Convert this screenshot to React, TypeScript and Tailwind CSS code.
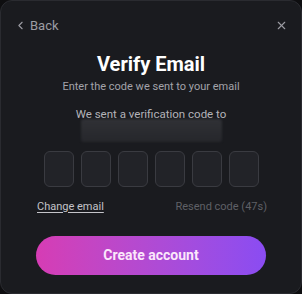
import { ChevronLeft, X } from "lucide-react";

export default function App() {
  const slots = [0, 1, 2, 3, 4, 5];

  return (
    <div className="w-[302px] h-[294px] bg-[#0e0e10]" style={{ fontFamily: "Roboto, 'Liberation Sans', sans-serif" }}>
      <div className="w-full h-full rounded-[12px] border border-[#2a2b30] bg-[#1a1b1f] flex flex-col">
        <div className="flex items-center justify-between pl-[13px] pr-[13px] pt-[15px]">
          <button className="flex items-center gap-[3px] text-[13px] text-[#9c9ca3]">
            <ChevronLeft className="size-[13px]" strokeWidth={2} />
            Back
          </button>
          <X className="size-[13px] text-[#9c9ca3]" strokeWidth={2} />
        </div>

        <h2 className="mt-[16px] text-center text-[20px] leading-[24px] font-bold text-white">Verify Email</h2>
        <p className="mt-[4px] text-center text-[11px] leading-[14px] text-[#a3a3aa]">
          Enter the code we sent to your email
        </p>

        <p className="mt-[13px] text-center text-[11.5px] leading-[14px] text-[#b4b4ba]">
          We sent a verification code to
        </p>
        <div className="mx-auto mt-[-2px] h-[23px] w-[141px] rounded-[3px] bg-gradient-to-b from-[#303136] to-[#26272b] blur-[1px]" />

        <div className="mt-[9px] flex justify-center gap-[7px]">
          {slots.map((i) => (
            <div
              key={i}
              className="h-[36px] w-[30px] rounded-[6px] border border-[#3a3b41] bg-[#222328]"
            />
          ))}
        </div>

        <div className="mt-[13px] flex items-center justify-between pl-[36px] pr-[34px] text-[11px] leading-[14px]">
          <span className="text-[#c4c4c9] underline underline-offset-2">Change email</span>
          <span className="text-[#5f6066]">Resend code (47s)</span>
        </div>

        <div className="mt-[22px] px-[35px]">
          <button className="h-[39px] w-full rounded-full bg-gradient-to-r from-[#d63cb4] to-[#8a4cf2] text-[14px] font-bold text-[#fbe6fb]">
            Create account
          </button>
        </div>
      </div>
    </div>
  );
}
